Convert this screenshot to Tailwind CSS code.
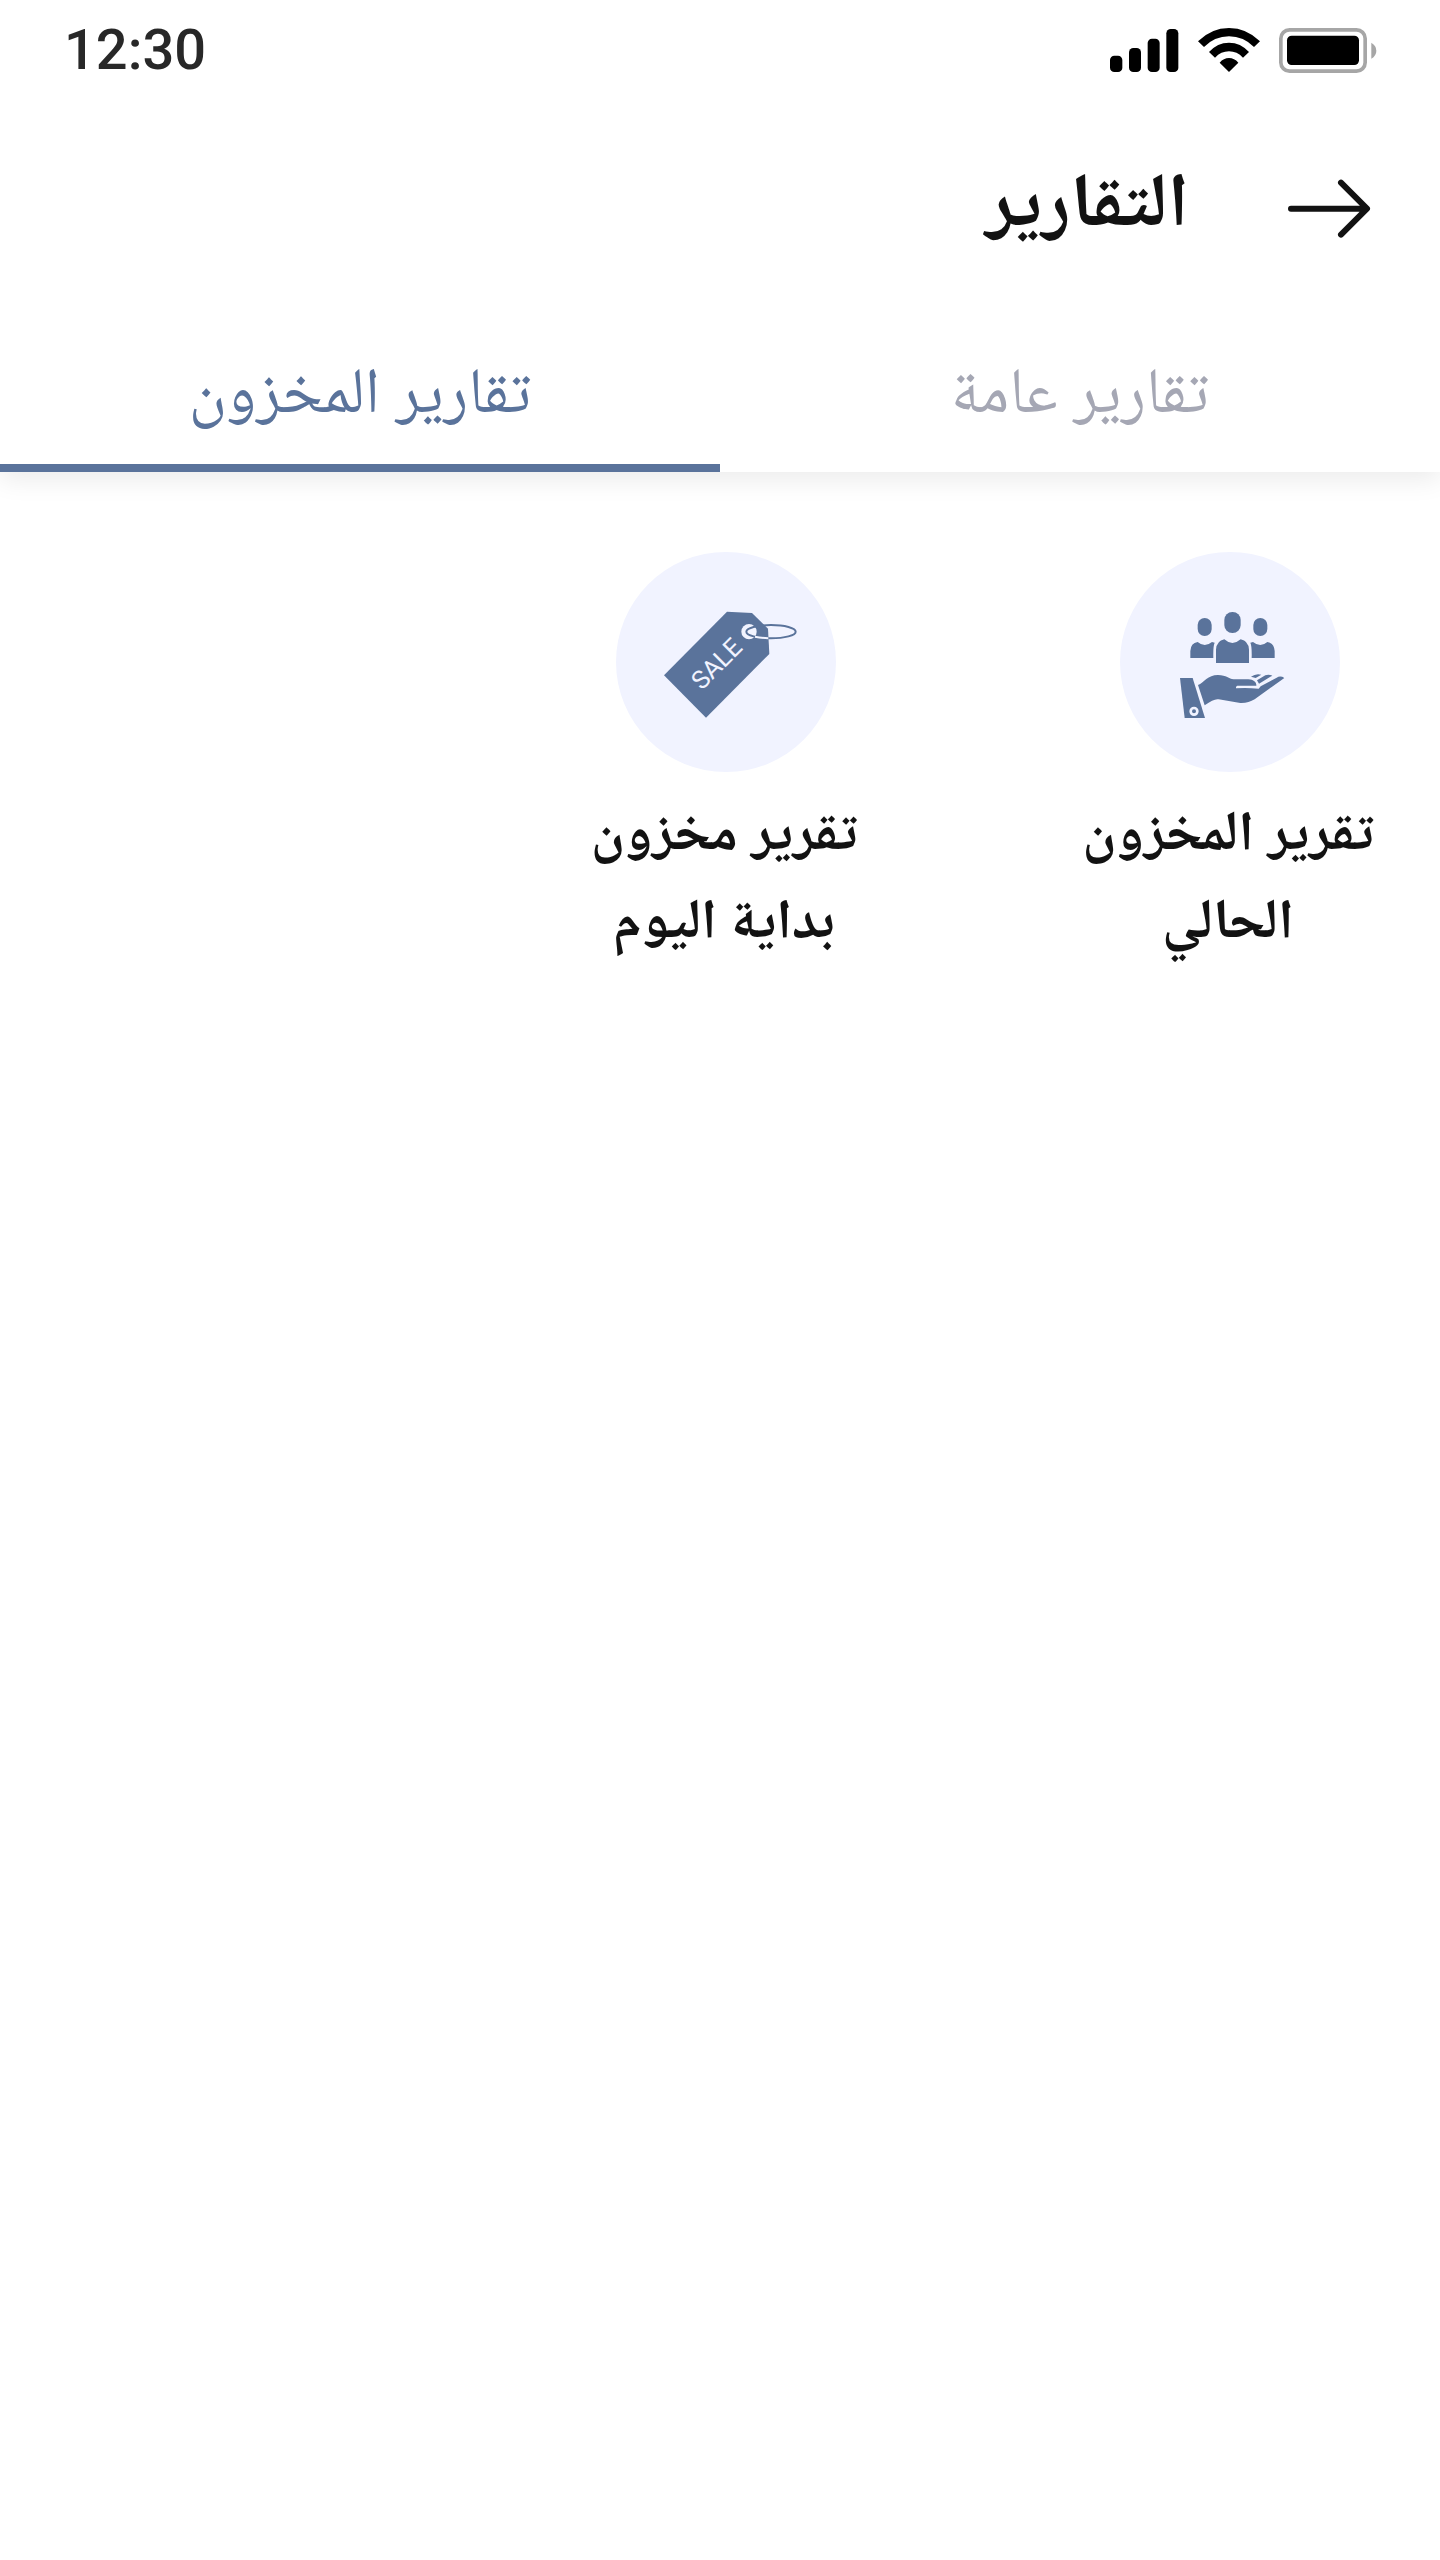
<!DOCTYPE html>
<html lang="ar" dir="rtl">
<head>
<meta charset="utf-8">
<meta name="viewport" content="width=device-width, initial-scale=1">
<title>التقارير</title>
<script src="https://cdn.jsdelivr.net/npm/@tailwindcss/browser@4"></script>
</head>
<body class="min-h-screen bg-white text-[#121212] font-['Roboto','Noto_Naskh_Arabic','Noto_Sans_Arabic','DejaVu_Sans',sans-serif]">
<header class="bg-white shadow-[0_8px_24px_rgba(0,0,0,0.08)]">
  <div dir="ltr" class="flex h-[100px] items-center justify-between pl-16 pr-[63px]">
    <time class="text-[56px] leading-[64px] font-medium text-[#282828]">12:30</time>
    <div class="flex items-center gap-[19px] pt-px">
      <svg class="h-[45px] w-[69px]" viewBox="57 54 207 135" aria-hidden="true">
        <rect x="57" y="137" width="37" height="49" rx="13"/><rect x="114" y="114" width="36" height="72" rx="13"/><rect x="170" y="86" width="36" height="100" rx="13"/><rect x="226" y="57" width="36" height="129" rx="13"/>
      </svg>
      <svg class="h-[45px] w-[62px]" viewBox="321 54 186 135" aria-hidden="true">
        <path d="M321 94Q361 54 414 54T507 94L489 111Q457 79 414 79T339 111ZM354 126Q379 98 414 98T474 126L456 143Q438 124 414 124T372 143ZM386 158Q398 144 414 144T442 158L414 186Z"/>
      </svg>
      <svg class="h-[45px] w-[98px]" viewBox="566 54 294 135" aria-hidden="true">
        <rect x="571.500" y="59.500" width="253" height="124" rx="26" fill="none" stroke="#a6a6a6" stroke-width="11"/><rect x="590" y="77" width="216" height="88" rx="14"/><path d="M843 98Q858 107 858 122T843 146Z" fill="#a6a6a6"/>
      </svg>
    </div>
  </div>
  <div class="flex h-[216px] items-center gap-[98px] pr-[69px]">
    <button type="button" aria-label="رجوع" class="pt-0.5">
      <svg class="h-[60px] w-[84px]" viewBox="1041 147 252 180" fill="none" stroke="#121212" stroke-width="18" stroke-linecap="round" stroke-linejoin="round" aria-hidden="true"><path d="M1053 236H1278M1203 158L1281 236L1203 314"/></svg>
    </button>
    <h1 class="pb-4 text-[76px] leading-[88px] font-bold">التقارير</h1>
  </div>
  <nav class="grid grid-cols-2 text-center text-[64px] leading-[88px]">
    <a href="#general" class="flex h-[156px] items-center justify-center border-b-8 border-transparent pt-0.5 text-[#a5a7b4]">تقارير عامة</a>
    <a href="#stock" aria-current="page" class="flex h-[156px] items-center justify-center border-b-8 border-[#5a739b] pt-0.5 text-[#5a739b]">تقارير المخزون</a>
  </nav>
</header>
<main class="grid grid-cols-[repeat(3,300px)] gap-[204px] px-[60px] pt-20 text-center text-[56px] leading-[88px] font-bold">
  <a href="#current" class="flex flex-col items-center gap-[15px]">
    <svg class="size-[220px] rounded-full bg-[#f1f3ff]" viewBox="30 36 660 660" fill="#5a739b" aria-hidden="true">
      <rect x="263" y="234" width="42" height="54" rx="21"/><rect x="343" y="216" width="49" height="63" rx="24"/><rect x="430" y="234" width="42" height="54" rx="21"/>
      <path d="M241 354V333Q242 309 263 306Q284 324 306 306L314 308Q309 318 310 354ZM494 354V333Q492 309 472 306Q451 324 429 306L421 308Q426 318 425 354ZM318 369V329Q320 302 343 298Q367 320 392 298Q415 302 417 329V369Z"/>
      <path d="M210 414H248L285 534H224Z"/>
      <circle cx="252" cy="514" r="10" fill="none" stroke="#f1f3ff" stroke-width="8"/>
      <path d="M264 435C282 428 293 405 324 405C350 405 356 417 371 418H415C432 418 440 429 439 437H382Q377 438 378 445Q410 443 446 446L452 439L500 413Q511 406 523 414L434 478Q415 490 391 489L326 478Q314 474 284 496Z"/>
      <path d="M423 410Q438 399 454 404L437 414ZM441 421L466 406Q476 402 487 407L447 431Z"/>
    </svg>
    <span class="pr-1">تقرير المخزون الحالي</span>
  </a>
  <a href="#opening" class="flex flex-col items-center gap-[15px]">
    <svg class="size-[220px] rounded-full bg-[#f1f3ff]" viewBox="30 36 660 660" aria-hidden="true">
      <path fill="#5a739b" d="M174 406L363 215L438 219L486 266L490 342L300 533Z"/>
      <circle cx="429" cy="275" r="23" fill="#f1f3ff"/>
      <g fill="none" stroke-width="6"><ellipse cx="495" cy="275" rx="74" ry="20" stroke="#5a739b"/><path d="M447 290Q465 294 487 295" stroke="#f1f3ff"/></g>
      <text x="287" y="453" direction="ltr" transform="rotate(-45 287 453)" fill="#f1f3ff" class="text-[76px] font-normal">SALE</text>
    </svg>
    <span class="pr-1">تقرير مخزون بداية اليوم</span>
  </a>
</main>
</body>
</html>
